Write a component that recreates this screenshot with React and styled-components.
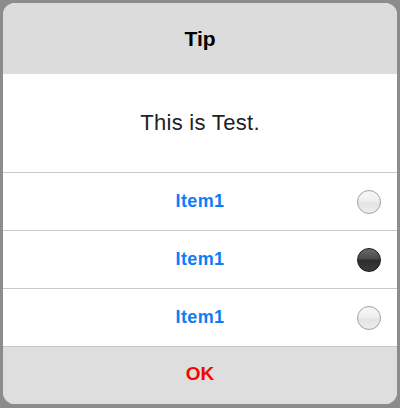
import React, { useState } from 'react';
import styled, { createGlobalStyle } from 'styled-components';

const Global = createGlobalStyle`
  html, body {
    margin: 0;
    padding: 0;
    background: #8c8c8c;
  }
  body {
    font-family: "Liberation Sans", Arial, sans-serif;
  }
`

const Page = styled.div`
  padding: 3px;
  height: 408px;
  box-sizing: border-box;
`

const Dialog = styled.div`
  width: 394px;
  height: 401px;
  border-radius: 12px;
  overflow: hidden;
  display: flex;
  flex-direction: column;
  background: #ffffff;
`

const Header = styled.div`
  height: 71px;
  background: #dcdcdc;
  display: flex;
  align-items: center;
  justify-content: center;
  font-size: 21px;
  font-weight: bold;
  color: #000;
  padding-top: 1px;
  box-sizing: border-box;
`

const Message = styled.div`
  height: 98px;
  display: flex;
  align-items: center;
  justify-content: center;
  font-size: 22px;
  color: #222;
  letter-spacing: 0.3px;
  border-bottom: 1px solid #c8c8c8;
`

const Row = styled.div`
  height: 57px;
  position: relative;
  display: flex;
  align-items: center;
  justify-content: center;
  border-bottom: 1px solid #c8c8c8;
  font-size: 18px;
  font-weight: bold;
  letter-spacing: 0.4px;
  color: #0f7cf6;
  cursor: pointer;
`

const Radio = styled.span`
  position: absolute;
  right: 16px;
  top: 50%;
  margin-top: -12px;
  width: 24px;
  height: 24px;
  border-radius: 50%;
  box-sizing: border-box;
  border: 1.5px solid ${p => (p.checked ? '#1a1a1a' : '#a0a0a0')};
  background: ${p =>
    p.checked
      ? 'linear-gradient(#6a6a6a 0%, #4a4a4a 45%, #2e2e2e 50%, #3a3a3a 100%)'
      : 'linear-gradient(#f8f8f8 0%, #efefef 45%, #e4e4e4 55%, #ededed 100%)'};
`

const Footer = styled.div`
  flex: 1;
  background: #dedede;
  display: flex;
  align-items: center;
  justify-content: center;
  font-size: 19px;
  font-weight: bold;
  color: #ff0000;
  padding-bottom: 3px;
`

export default function App() {
  const [selected, setSelected] = useState(1);
  const items = ['Item1', 'Item1', 'Item1'];
  return (
    <Page>
      <Global />
      <Dialog>
        <Header>Tip</Header>
        <Message>This is Test.</Message>
        {items.map((item, i) => (
          <Row key={i} onClick={() => setSelected(i)}>
            {item}
            <Radio checked={selected === i} />
          </Row>
        ))}
        <Footer>OK</Footer>
      </Dialog>
    </Page>
  );
}
